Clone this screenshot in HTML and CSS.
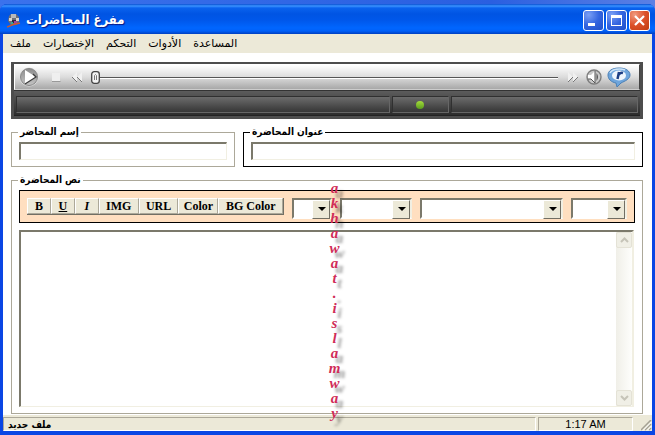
FILE: index.html
```html
<!DOCTYPE html>
<html lang="ar">
<head>
  <meta charset="UTF-8">
  <title>مفرغ المحاضرات</title>
  <link rel="stylesheet" href="styles.css">
</head>
<body>
  <div class="window">
    <header class="titlebar">
      <svg class="app-icon" width="14" height="15" viewBox="0 0 14 15">
        <path d="M2 3L4 1H9L12 4V9L9 12H4L1 8Z" fill="#6d6f78"/>
        <path d="M4 1H9V5H4Z" fill="#b9b9b9"/>
        <path d="M2 5H5V8H2ZM9 5H12V8H9Z" fill="#d8d4cc"/>
        <path d="M5 7H9V10H5Z" fill="#2b2540"/>
        <path d="M4 9H6V11H4Z" fill="#2fa79a"/>
        <path d="M7 8H10V11H7Z" fill="#a0449a"/>
        <path d="M0 14L5 12L13 10" fill="none" stroke="#c8592c" stroke-width="1.5"/>
      </svg>
      <h1 dir="rtl">مفرغ المحاضرات</h1>
      <div class="window-buttons">
        <button type="button" class="win-btn" aria-label="Minimize">
          <svg width="19" height="19" viewBox="0 0 19 19"><path d="M4 12H11V15H4Z" fill="#fff"/></svg>
        </button>
        <button type="button" class="win-btn" aria-label="Maximize">
          <svg width="19" height="19" viewBox="0 0 19 19"><path d="M4 4H15V15H4ZM5 7V14H14V7Z" fill="#fff" fill-rule="evenodd"/></svg>
        </button>
        <button type="button" class="win-btn close" aria-label="Close">
          <svg width="19" height="19" viewBox="0 0 19 19"><path d="M5 5L14 14M14 5L5 14" stroke="#fff" stroke-width="2.2"/></svg>
        </button>
      </div>
    </header>

    <nav class="menu">
      <a href="#">ملف</a>
      <a href="#">الإختصارات</a>
      <a href="#">التحكم</a>
      <a href="#">الأدوات</a>
      <a href="#">المساعدة</a>
    </nav>

    <main class="content">
      <section class="player">
        <div class="controls">
          <button type="button" aria-label="Play">
            <svg width="20" height="20" viewBox="0 0 20 20">
              <defs>
                <linearGradient id="ring" x1="0" y1="0" x2="0" y2="1">
                  <stop offset="0" stop-color="#8c8c8c"/>
                  <stop offset="1" stop-color="#c4c4c4"/>
                </linearGradient>
              </defs>
              <circle cx="10" cy="10" r="9.5" fill="#dedede"/>
              <circle cx="10" cy="10" r="8.5" fill="url(#ring)" stroke="#888"/>
              <path d="M6 3V17L17 10Z" fill="#fff"/>
              <path d="M6 17L17 10L14 7" fill="none" stroke="#3c3c3c" stroke-width="1.3"/>
            </svg>
          </button>
          <button type="button" class="stop" aria-label="Stop">
            <svg width="9" height="9" viewBox="0 0 9 9"><path d="M0 0H8V8H0Z" fill="#efefef"/><path d="M0 8.5H8.5" stroke="#999"/></svg>
          </button>
          <button type="button" class="rewind" aria-label="Rewind">
            <svg width="11" height="11" viewBox="0 0 11 11"><path d="M5 0V10L0 5ZM10 0V10L5 5Z" fill="#f0f0f0"/><path d="M0 5L5 10M5 5L10 10" stroke="#777"/></svg>
          </button>
          <div class="track">
            <svg width="9" height="13" viewBox="0 0 9 13"><rect x=".7" y=".7" width="7.6" height="11.6" rx="2.5" fill="#f3f3f3" stroke="#444" stroke-width="1.3"/><path d="M3.5 9V4.500Q4.5 2.5 5.5 4.5V9" fill="none" stroke="#777"/></svg>
          </div>
          <button type="button" class="forward" aria-label="Forward">
            <svg width="11" height="11" viewBox="0 0 11 11"><path d="M0 0V10L5 5ZM5 0V10L10 5Z" fill="#f0f0f0"/><path d="M0 10L5 5M5 10L10 5" stroke="#777"/></svg>
          </button>
          <button type="button" class="volume" aria-label="Volume">
            <svg width="16" height="16" viewBox="0 0 16 16">
              <circle cx="8" cy="8" r="7" fill="#c9c9c9" stroke="#7d7d7d" stroke-width="1.4"/>
              <path d="M2 6H5L9 2V14L5 10H2Z" fill="#fff"/>
              <path d="M2 10H5L9 14V2" fill="none" stroke="#555"/>
              <path d="M10.5 4Q13.5 8 10.5 12Z" fill="#555"/>
            </svg>
          </button>
          <button type="button" aria-label="RealPlayer">
            <svg width="24" height="21" viewBox="0 0 24 21">
              <path d="M12 1C19 1 23 4 23 8C23 12 18 14 14 16L10 20L9 16C4 15 1 12 1 8C1 4 5 1 12 1Z" fill="#6ea5dc" stroke="#4a7fb5"/>
              <path d="M3 6C5 2 13 1 18 3" fill="none" stroke="#cfe5f8" stroke-width="1.5"/>
              <ellipse cx="12" cy="8.5" rx="7" ry="5" fill="#eef6fd"/>
              <path d="M12 5L10.5 12M11.500 8Q13 5 16 6" fill="none" stroke="#1c3f86" stroke-width="2.5"/>
            </svg>
          </button>
        </div>
        <div class="display">
          <div class="cell cell-title"></div>
          <div class="cell cell-led"><span class="led"></span></div>
          <div class="cell cell-time"></div>
        </div>
      </section>

      <div class="fields">
        <fieldset class="speaker">
          <legend><label for="speaker" dir="rtl">إسم المحاضر</label></legend>
          <input type="text" id="speaker">
        </fieldset>
        <fieldset class="subject">
          <legend><label for="subject" dir="rtl">عنوان المحاضرة</label></legend>
          <input type="text" id="subject">
        </fieldset>
      </div>

      <fieldset class="lecture">
        <legend><label for="lecture" dir="rtl">نص المحاضرة</label></legend>
        <div class="toolbar">
          <div class="format">
            <button type="button" class="small">B</button>
            <button type="button" class="small underline">U</button>
            <button type="button" class="small italic">I</button>
            <button type="button">IMG</button>
            <button type="button">URL</button>
            <button type="button">Color</button>
            <button type="button" class="wide">BG Color</button>
          </div>
          <div class="combo combo-size"><select aria-label="Size"></select></div>
          <div class="combo combo-align"><select aria-label="Align"></select></div>
          <div class="combo combo-font"><select aria-label="Font"></select></div>
          <div class="combo combo-style"><select aria-label="Style"></select></div>
        </div>
        <div class="editor">
          <textarea id="lecture" dir="rtl"></textarea>
          <div class="scrollbar">
            <button type="button" aria-label="Up"><svg width="9" height="6" viewBox="0 0 9 6"><path d="M1 5L4.5 1.5L8 5" fill="none" stroke="#c6c4b8" stroke-width="2"/></svg></button>
            <button type="button" aria-label="Down"><svg width="9" height="6" viewBox="0 0 9 6"><path d="M1 1L4.5 4.5L8 1" fill="none" stroke="#c6c4b8" stroke-width="2"/></svg></button>
          </div>
        </div>
      </fieldset>
    </main>

    <footer class="status">
      <div class="panel file-name" dir="rtl">ملف جديد</div>
      <div class="panel clock">1:17 AM</div>
      <svg class="grip" width="11" height="11" viewBox="0 0 11 11"><path d="M0 10L10 0M4 10L10 4M8 10L10 8" stroke="#a5a294" stroke-width="1.5"/><path d="M2 10.5L10.5 2M6 10.5L10.5 6" stroke="#fff"/></svg>
    </footer>

    <div class="watermark">
      <span>a</span><span>k</span><span>h</span><span>a</span><span>w</span><span>a</span><span>t</span><span>.</span><span>i</span><span>s</span><span>l</span><span>a</span><span>m</span><span>w</span><span>a</span><span>y</span>
    </div>
  </div>
</body>
</html>
```
FILE: styles.css
```css
* { box-sizing: border-box; }
body { margin: 0; padding-top: 4px; min-height: 100vh; display: flex; background: linear-gradient(to right, #3b72ec, #2a5fe0 75%, #5c80e4); font-family: "DejaVu Sans", sans-serif; font-size: 11px; color: #000; }
button { padding: 0; border: 0; background: none; font: inherit; color: inherit; }
svg { display: block; }

.window { position: relative; flex: 1; display: flex; flex-direction: column; border: 3px solid #0a46e4; border-top: 0; border-bottom-width: 4px; border-radius: 7px 7px 0 0; background: #0a46e4; }

.titlebar { display: flex; align-items: center; height: 30px; margin: 0 -3px; padding: 2px 5px 0 7px; border-radius: 7px 7px 0 0; background: linear-gradient(#0a4fd0, #3a93ff 2px, #0a62ee 4px, #0054e3 10px, #0057ea 16px, #0066ff 24px, #0060f8 27px, #003fc0); }
.titlebar h1 { flex: 1; margin: 0 0 0 5px; font-family: "DejaVu Sans Condensed", "DejaVu Sans", sans-serif; font-size: 13px; line-height: 20px; color: #fff; text-align: left; text-shadow: 1px 1px 1px #0a1883; }
.window-buttons { display: flex; gap: 2px; }
.win-btn { width: 21px; height: 21px; border: 1px solid #fff; border-radius: 3px; background: radial-gradient(circle at 25% 20%, #7a9ff5, #3465e0 50%, #2050c8); }
.win-btn.close { background: radial-gradient(circle at 25% 20%, #f09a80, #dc5028 50%, #c03c10); }

.menu { display: flex; gap: 12px; height: 19px; padding: 0 7px; background: #ece9d8; }
.menu a { color: #000; text-decoration: none; line-height: 19px; }

.content { flex: 1; display: flex; flex-direction: column; padding: 9px 9px 1px 8px; background: #fff; }

.player { padding: 2px 3px 3px; background: #4d4d4d; }
.controls { display: flex; align-items: center; height: 26px; padding: 0 8px 0 4px; border: 1px solid #fff; border-right-color: #444; border-bottom-color: #ccc; background: linear-gradient(#fff, #dcdcdc 50%, #a8a8a8); }
.stop { margin-left: 13px; }
.rewind { margin-left: 11px; }
.track { flex: 1; margin: 0 10px 0 8px; background: linear-gradient(#555, #555) 0 6px / 100% 1px no-repeat, linear-gradient(#fff, #fff) 0 7px / 100% 1px no-repeat; }
.volume { margin: 0 5px 0 7px; }
.display { display: flex; gap: 2px; height: 26px; padding: 5px 2px 2px; border-top: 1px solid #333; border-bottom: 1px solid #222; background: linear-gradient(#5c5c5c, #2c2c2c); }
.cell { border: 1px solid #303030; border-right-color: #666; border-bottom-color: #666; background: linear-gradient(#6c6c6c, #363636); }
.cell-title { flex: 376; }
.cell-led { flex: 56; display: flex; align-items: center; justify-content: center; }
.cell-time { flex: 187; }
.led { width: 8px; height: 8px; border-radius: 50%; background: linear-gradient(#a5dc3c, #5a9c1c); }

.fields { display: flex; gap: 8px; margin-top: 6px; }
fieldset { min-width: 0; margin: 0; padding: 3px 7px 6px; border: 1px solid #aca899; }
legend { padding: 0 2px; margin-left: -1px; height: 14px; font-family: "DejaVu Sans Condensed", "DejaVu Sans", sans-serif; font-weight: bold; font-size: 10px; }
legend label { display: block; line-height: 14px; }
.speaker { flex: 208; }
.subject { flex: 384; border-color: #000; }
input { display: block; width: 100%; height: 18px; padding: 0 2px; border: 2px solid #7b796b; border-right: 1px solid #f1efe2; border-bottom: 1px solid #f1efe2; background: #fff; font: inherit; }

.lecture { flex: 1; display: flex; flex-direction: column; margin-top: 6px; }
.toolbar { display: flex; align-items: flex-start; gap: 8px; height: 33px; padding: 7px; border: 1px solid #000; background: #ffdfc0; }
.format { display: flex; flex: 257; height: 17px; border-right: 1px solid #716f64; border-bottom: 1px solid #716f64; }
.format button { flex: 38; min-width: 0; border: 1px solid #fff; border-right-color: #aca899; border-bottom-color: #aca899; background: #ece9d8; font: bold 12px/14px "Liberation Serif", serif; white-space: nowrap; }
.format .small { flex: 22; }
.format .wide { flex: 63; }
.underline { text-decoration: underline; }
.format .italic { font-style: italic; }

.combo { position: relative; height: 21px; }
.combo-size { flex: 40; }
.combo-align { flex: 72; }
.combo-font { flex: 144; }
.combo-style { flex: 56; }
.combo select { appearance: none; display: block; width: 100%; height: 21px; padding: 0; border: 2px solid #7b796b; border-right-color: #f1efe2; border-bottom-color: #fff; border-radius: 0; background: #fff; }
.combo::before { content: ""; position: absolute; top: 2px; right: 2px; width: 16px; height: 17px; border: 1px solid #fff; border-right-color: #716f64; border-bottom-color: #716f64; background: #ece9d8; pointer-events: none; }
.combo::after { content: ""; position: absolute; top: 9px; right: 6px; border: 4px solid transparent; border-top-color: #000; border-bottom: 0; pointer-events: none; }

.editor { flex: 1; display: flex; margin-top: 7px; margin-right: 1px; border: 2px solid #7b796b; border-right-color: #f1efe2; border-bottom: 1px solid #f1efe2; }
textarea { flex: 1; min-width: 0; padding: 2px; border: 0; resize: none; outline: none; background: #fff; font: inherit; overflow: hidden; }
.scrollbar { display: flex; flex-direction: column; justify-content: space-between; width: 16px; background: linear-gradient(to right, #f0efe8, #fefefc); }
.scrollbar button { display: flex; align-items: center; justify-content: center; width: 16px; height: 16px; border: 1px solid #e4e2d6; border-radius: 2px; background: #f0efe6; }

.status { display: flex; gap: 2px; height: 16px; padding-top: 2px; background: #ece9d8; }
.panel { border: 1px solid #aca899; border-right-color: #fff; border-bottom-color: #fff; line-height: 13px; }
.file-name { flex: 1; padding: 0 4px; text-align: left; font-family: "DejaVu Sans Condensed", "DejaVu Sans", sans-serif; font-weight: bold; font-size: 10px; }
.clock { width: 95px; text-align: center; font-family: "Liberation Sans", sans-serif; font-size: 11px; }
.grip { margin: 3px 0 0 6px; }

.watermark { position: absolute; top: 177px; left: 0; right: 0; padding-left: 14px; pointer-events: none; text-align: center; color: #d02c58; font: italic bold 15px/15px "Liberation Serif", serif; text-shadow: 5px 5px 3px rgba(0, 0, 0, 0.4); }
.watermark span { display: block; }
```
